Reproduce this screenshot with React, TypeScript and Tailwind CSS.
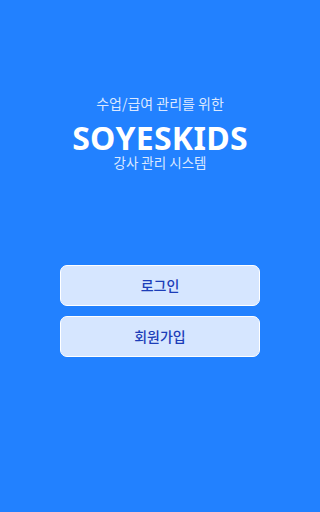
export default function App() {
  return (
    <div
      className="flex h-[512px] w-full flex-col items-center bg-[#2281ff]"
      style={{ fontFamily: '"Noto Sans CJK KR", "Noto Sans", sans-serif' }}
    >
      {/* Title */}
      <div className="mt-[94px] flex flex-col items-center">
        <p className="text-[14px] leading-[18px] text-[#dbe8ff]">수업/급여 관리를 위한</p>
        <h1
          className="mt-[11px] text-[32px] font-bold leading-[30px] tracking-[0.3px] text-white"
          style={{ fontFamily: '"Noto Sans", sans-serif' }}
        >
          SOYESKIDS
        </h1>
        <p className="text-[13.5px] leading-[18px] text-[#dbe8ff]">강사 관리 시스템</p>
      </div>

      {/* Buttons */}
      <div className="mt-[94px] flex w-[200px] flex-col gap-[10px]">
        <button className="h-[41px] w-full rounded-[7px] border border-white bg-[#d6e6ff] text-[14px] font-medium text-[#1c3db8]">
          로그인
        </button>
        <button className="h-[41px] w-full rounded-[7px] border border-white bg-[#d6e6ff] text-[14px] font-medium text-[#1c3db8]">
          회원가입
        </button>
      </div>
    </div>
  );
}
